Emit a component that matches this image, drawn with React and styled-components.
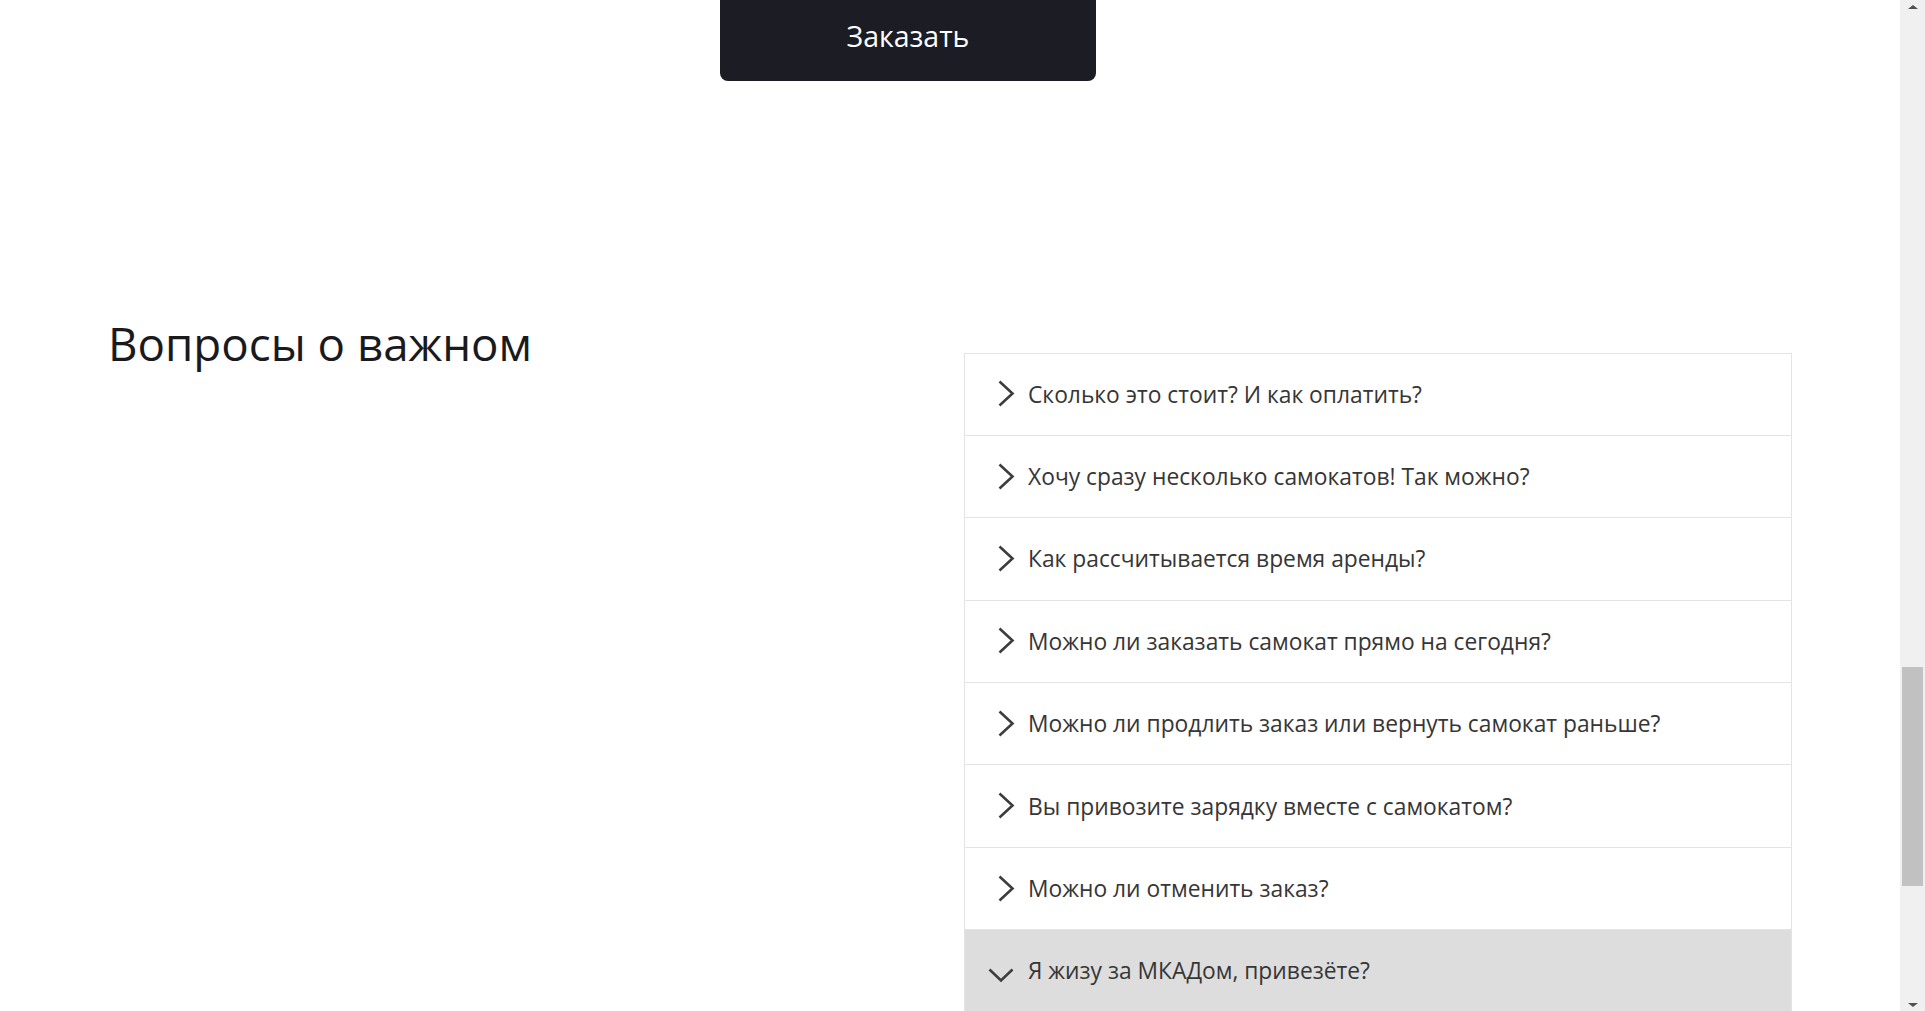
import React from "react";
import styled, { createGlobalStyle } from "styled-components";

const GlobalStyle = createGlobalStyle`
  html, body {
    margin: 0;
    padding: 0;
    background: #fff;
    overflow: hidden;
  }
  * {
    box-sizing: border-box;
  }
`;

const questions = [
  "Сколько это стоит? И как оплатить?",
  "Хочу сразу несколько самокатов! Так можно?",
  "Как рассчитывается время аренды?",
  "Можно ли заказать самокат прямо на сегодня?",
  "Можно ли продлить заказ или вернуть самокат раньше?",
  "Вы привозите зарядку вместе с самокатом?",
  "Можно ли отменить заказ?",
  "Я жизу за МКАДом, привезёте?",
];

const Chevron = ({ open }) => (
  <Icon viewBox="0 0 36 28" width="36" height="28">
    {open ? (
      <polyline points="1.5,12.5 13,23.5 24.5,12.5" />
    ) : (
      <polyline points="11.5,1.5 24.5,13.5 11.5,25.5" />
    )}
  </Icon>
);

const App = () => {
  return (
    <Screen>
      <GlobalStyle />
      <Main>
        <OrderButton>Заказать</OrderButton>
        <FaqSection>
          <Title>Вопросы о важном</Title>
          <Accordion>
            {questions.map((q, i) => {
              const open = i === questions.length - 1;
              return (
                <Row key={q} $open={open}>
                  <Chevron open={open} />
                  <Question>{q}</Question>
                </Row>
              );
            })}
          </Accordion>
        </FaqSection>
      </Main>
      <Scrollbar>
        <Arrow $dir="up" />
        <Track>
          <Thumb />
        </Track>
        <Arrow $dir="down" />
      </Scrollbar>
    </Screen>
  );
};

const Screen = styled.div`
  display: flex;
  width: 100vw;
  height: 1011px;
  overflow: hidden;
`;

const Main = styled.main`
  flex: 1;
  display: flex;
  flex-direction: column;
  overflow: hidden;
`;

const OrderButton = styled.button`
  flex: none;
  align-self: flex-start;
  margin: -11px 0 0 720px;
  width: 376px;
  height: 92px;
  border: none;
  border-radius: 8px;
  background: #1c1d24;
  color: #fff;
  font-family: "Open Sans", sans-serif;
  font-size: 28.5px;
  font-weight: 500;
  padding-top: 2px;
  cursor: pointer;
`;

const FaqSection = styled.section`
  flex: none;
  display: grid;
  grid-template-columns: 1fr 828px;
  align-items: start;
  padding: 0 108px 0 108px;
  margin-top: 235px;
`;

const Title = styled.h2`
  margin: 0;
  font-family: "Open Sans", sans-serif;
  font-weight: 400;
  font-size: 45.7px;
  line-height: 1.2;
  color: #1a1a1d;
`;

const Accordion = styled.div`
  margin-top: 36.5px;
  border: 1px solid #e4e4e4;
  border-bottom: none;
`;

const Row = styled.div`
  display: flex;
  align-items: center;
  height: 82.4px;
  padding-left: 23px;
  border-bottom: 1px solid #e4e4e4;
  background: ${(p) => (p.$open ? "#dddddd" : "#fff")};
`;

const Icon = styled.svg`
  flex: none;
  fill: none;
  stroke: #3d3d3d;
  stroke-width: 2.6;
  stroke-linecap: butt;
  stroke-linejoin: miter;
`;

const Question = styled.span`
  margin-left: 4px;
  font-family: "Open Sans", sans-serif;
  font-size: 22.8px;
  color: #363636;
  white-space: nowrap;
`;

const Scrollbar = styled.div`
  flex: none;
  width: 25px;
  display: flex;
  flex-direction: column;
  background: #f0f0f0;
`;

const Track = styled.div`
  flex: 1;
  padding: 654px 2px 0 2px;
`;

const Thumb = styled.div`
  height: 219px;
  background: #c1c1c1;
`;

const Arrow = styled.div`
  height: 13px;
  display: flex;
  align-items: center;
  justify-content: center;
  &::after {
    content: "";
    border-left: 5px solid transparent;
    border-right: 5px solid transparent;
    ${(p) =>
      p.$dir === "up"
        ? "border-bottom: 4px solid #505050;"
        : "border-top: 4px solid #505050;"}
  }
`;

export default App;
